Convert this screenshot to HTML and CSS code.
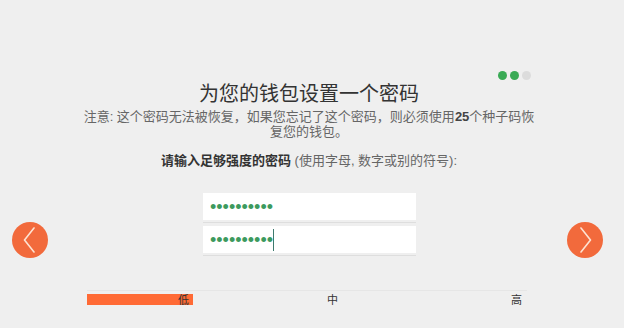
FILE: index.html
```html
<!DOCTYPE html>
<html lang="zh-CN">
<head>
<meta charset="utf-8">
<title>设置密码</title>
<link rel="stylesheet" href="styles.css">
</head>
<body>
<div class="page">
  <main class="column">
    <div class="steps">
      <span class="step done"></span>
      <span class="step done"></span>
      <span class="step"></span>
    </div>
    <h1 class="title">为您的钱包设置一个密码</h1>
    <p class="note"><span class="line">注意: 这个密码无法被恢复，如果您忘记了这个密码，则必须使用<strong>25</strong>个种子码恢</span><span class="line">复您的钱包。</span></p>
    <p class="prompt"><b>请输入足够强度的密码</b> (使用字母, 数字或别的符号):</p>
    <div class="fields">
      <div class="field"><div class="box"><span class="mask">••••••••••</span></div></div>
      <div class="field"><div class="box"><span class="mask">••••••••••</span><span class="caret"></span></div></div>
    </div>
    <div class="meter">
      <div class="seg low"><span>低</span></div>
      <div class="seg mid"><span>中</span></div>
      <div class="seg high"><span>高</span></div>
    </div>
  </main>
  <button class="nav prev" aria-label="上一步">
    <svg width="12" height="26" viewBox="0 0 12 26"><path d="M11 1 L1.5 13 L11 25" fill="none" stroke="#fde3d3" stroke-width="1.6" stroke-linecap="round" stroke-linejoin="round"/></svg>
  </button>
  <button class="nav next" aria-label="下一步">
    <svg width="12" height="26" viewBox="0 0 12 26"><path d="M1 1 L10.5 13 L1 25" fill="none" stroke="#fde3d3" stroke-width="1.6" stroke-linecap="round" stroke-linejoin="round"/></svg>
  </button>
</div>
</body>
</html>
```
FILE: styles.css
```css
* { box-sizing: border-box; }
html, body { margin: 0; padding: 0; }
body {
  background: #efefef;
  font-family: "Liberation Sans", "Noto Sans CJK SC", sans-serif;
  color: #333;
  width: 624px;
  height: 328px;
  overflow: hidden;
}
.page {
  position: relative;
  width: 624px;
  height: 328px;
  padding-top: 71px;
}
.column {
  width: 452px;
  margin-left: 83px;
  display: flex;
  flex-direction: column;
  align-items: center;
}
.steps {
  align-self: flex-end;
  display: flex;
  gap: 3px;
  height: 9px;
  margin-right: 4px;
}
.step {
  width: 9px;
  height: 9px;
  border-radius: 50%;
  background: #dcdcdc;
}
.step.done { background: #3aaa55; }
.title {
  margin: 0;
  font-family: "Noto Sans CJK SC", sans-serif;
  font-weight: 400;
  font-size: 20px;
  line-height: 26px;
  color: #333;
  height: 26px;
}
.note {
  margin: 3px 0 0;
  font-family: "Liberation Sans", "Noto Sans CJK SC", sans-serif;
  font-size: 13px;
  line-height: 15px;
  color: #666;
  text-align: center;
  display: flex;
  flex-direction: column;
  align-items: center;
}
.line { display: block; white-space: nowrap; }
.note strong { color: #444; font-weight: 700; }
.prompt {
  margin: 13px 0 0;
  font-size: 13px;
  line-height: 18px;
  color: #666;
}
.prompt b { color: #333; font-weight: 700; }
.fields {
  margin-top: 23px;
  display: flex;
  flex-direction: column;
  gap: 3px;
  width: 213px;
  margin-left: 1px;
}
.field {
  padding-bottom: 2px;
  border-bottom: 1px solid #dedede;
}
.box {
  height: 27px;
  background: #fff;
  display: flex;
  align-items: center;
  padding-left: 7px;
}
.mask {
  font-family: "Liberation Sans", sans-serif;
  font-size: 18px;
  letter-spacing: 0;
  color: #3d9a5e;
  line-height: 20px;
}
.caret {
  width: 1px;
  height: 22px;
  background: #3d7a6e;
}
.meter {
  margin-top: 34px;
  width: 440px;
  height: 16px;
  border-top: 1px solid #e6e6e6;
  padding-top: 3px;
  display: flex;
  align-self: flex-start;
  margin-left: 4px;
}
.seg {
  height: 11px;
  display: flex;
  justify-content: flex-end;
  align-items: center;
  font-family: "Noto Sans CJK SC", sans-serif;
  font-size: 11px;
  color: #333;
}
.seg span { line-height: 11px; }
.low { width: 106px; background: #ff6a35; padding-right: 4px; }
.mid { width: 149px; padding-right: 4px; }
.high { flex: 1; padding-right: 5px; }
.nav {
  position: absolute;
  top: 222px;
  width: 36px;
  height: 36px;
  border: 0;
  padding: 0;
  border-radius: 50%;
  background: #f26a3c;
  display: flex;
  align-items: center;
  justify-content: center;
  cursor: pointer;
}
.prev { left: 12px; }
.prev svg { margin-right: 2px; }
.next { left: 567px; }
.next svg { margin-left: 2px; }
```
